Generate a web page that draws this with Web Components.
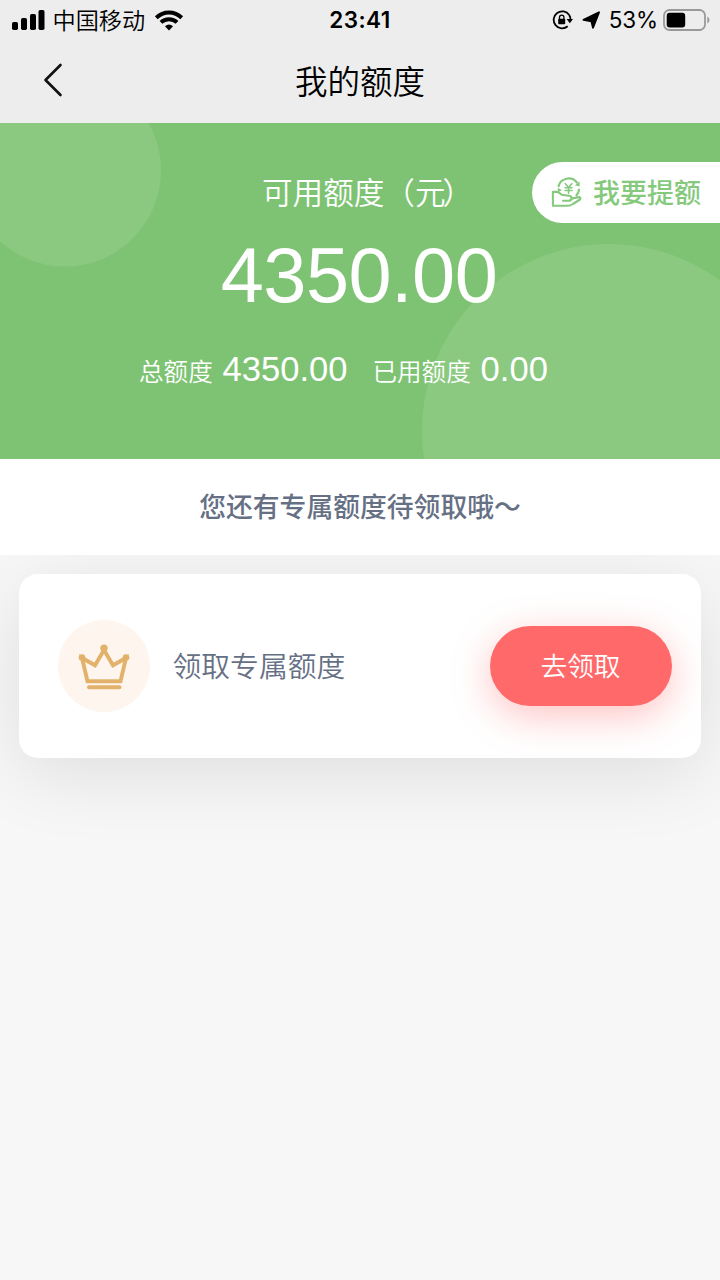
<!DOCTYPE html>
<html lang="zh-CN">
<head>
<meta charset="utf-8">
<title>我的额度</title>
<style>
body{margin:0;background:#f7f7f7;font-family:"Liberation Sans","Noto Sans CJK SC",sans-serif}
</style>
</head>
<body>
<quota-page></quota-page>
<script>
function define(name, html){
  const t=document.createElement('template');
  t.innerHTML=html;
  customElements.define(name,class extends HTMLElement{
    constructor(){super();this.attachShadow({mode:'open'}).appendChild(t.content.cloneNode(true));}
  });
}
define('status-bar',`<style>
:host{display:grid;grid-template-columns:1fr auto 1fr;align-items:center;height:39px;padding-bottom:1px;color:#000;font-family:Inter,"Noto Sans CJK SC",sans-serif}
.side{display:flex;align-items:center}
.left{padding-left:12px}
.right{justify-content:flex-end;padding-right:10px}
.carrier{font:350 23.2px/38px "Noto Sans CJK SC",sans-serif;margin:-1px 9px 0 7.5px}
.time{font-size:22.5px;font-weight:600;letter-spacing:.45px}
.pct{font-size:22.5px;margin:0 5px 0 8px;letter-spacing:-.1px}
svg{display:block}
</style>
<div class="side left">
<svg width="33" height="20" viewBox="0 0 33 20"><rect y="12" width="6" height="8" rx="1.7"/><rect x="9" y="8" width="6" height="12" rx="1.7"/><rect x="18" y="4" width="6" height="16" rx="1.7"/><rect x="26.5" width="6" height="20" rx="1.7"/></svg>
<span class="carrier">中国移动</span>
<svg width="30" height="22" viewBox="0 0 30 22"><g fill="none" stroke="#000" stroke-width="4"><path d="M2.3 8.7C9.5 1.7 20.5 1.7 27.7 8.7"/><path d="M7 13.4C11.4 9.2 18.6 9.2 23 13.4"/></g><path d="M11 17.2Q15 14 19 17.2L15 21.5Z"/></svg>
</div>
<span class="time">23:41</span>
<div class="side right">
<svg width="22" height="20" viewBox="0 0 22 20"><path d="M17.2 5A8.5 8.5 0 1 0 15.7 16.3" fill="none" stroke="#000" stroke-width="1.8"/><path d="M17.2 5Q18.6 7.2 18.5 10" fill="none" stroke="#000" stroke-width="1.8"/><path d="M14.6 9H21l-3.2 4.3z"/><rect x="6.2" y="8.7" width="7" height="5.6" rx=".8"/><path d="M7.5 9V7.3a2.2 2.2 0 0 1 4.4 0V9" fill="none" stroke="#000" stroke-width="1.3"/></svg>
<svg width="19" height="18" viewBox="0 0 19 18" style="margin-left:8px"><path d="M1.5 8.8 17 1.3 11 16.7 9.4 10.2Z" stroke="#000" stroke-width="1.9" stroke-linejoin="round"/></svg>
<span class="pct">53%</span>
<svg width="47" height="22" viewBox="0 0 47 22"><rect x="1" y="1" width="41" height="20" rx="5.5" fill="none" stroke="#999" stroke-width="1.8"/><rect x="3.7" y="3.7" width="18.5" height="14.8" rx="3"/><path d="M44.3 7.6Q46.5 9 46.5 11T44.3 14.6Z" fill="#999"/></svg>
</div>`);
define('nav-bar',`<style>
:host{display:grid;grid-template-columns:80px 1fr 80px;align-items:center;height:83px;color:#000}
svg{display:block;margin:-4px 0 0 43px}
h1{margin:0;padding-bottom:4px;text-align:center;font:350 32.5px/79px "Noto Sans CJK SC",sans-serif}
</style><svg width="20" height="34" viewBox="0 0 20 34"><path d="M17.5 2 2.5 17l15 15" fill="none" stroke="#111" stroke-width="2.6" stroke-linecap="round" stroke-linejoin="round"/></svg><h1><slot></slot></h1><span></span>`);
define('raise-button',`<style>
:host{display:flex;align-items:center;box-sizing:border-box;width:188.5px;height:61px;padding-left:19.5px;border-radius:31px 0 0 31px;background:#fff;color:#85c97c}
span{font:500 27px/60px "Noto Sans CJK SC",sans-serif;margin-left:11px;white-space:nowrap}
svg{display:block;overflow:visible}
</style><svg width="31" height="31" viewBox="0 0 31 31" fill="none" stroke="#85c97c" stroke-width="2.1" stroke-linecap="round" stroke-linejoin="round"><path d="M7.3 10A10.5 10.5 0 0 1 26.4 6.2M28.1 11.8A10.5 10.5 0 0 1 24.9 19" stroke-linecap="butt"/><path d="M28.6 4.6V9.4L23.9 8.2ZM6.8 15V10.8L11 13.2Z" fill="#85c97c" stroke="none"/><path d="M14.4 6.7 17.6 10.4 20.8 6.7M17.6 10.4V16.2M14.2 10.7H21M14.2 13.5H21" stroke-width="1.6"/><path d="M1.9 14.9V28.7H16.5Q19.5 28.7 22 27L29 22.5Q30.2 20.6 28 20.1L20.6 21.6Q20 23.8 17.3 23.8H12M1.9 14.9H6Q8.4 15.3 10.4 17.7L18 18.7Q20.8 19.2 20.6 21.6"/></svg><span><slot></slot></span>`);
define('quota-hero',`<style>
:host{display:block;position:relative;overflow:hidden;height:336px;background:#7ec373;color:#fff}
.bg{position:absolute;inset:0}
raise-button{position:absolute;right:0;top:38.5px}
.content{position:relative;display:flex;flex-direction:column}
.label{font:350 30.6px/46px "Noto Sans CJK SC",sans-serif;padding:45px 0 0 262px;white-space:nowrap}
.close{margin-left:-3px}
.sum{font-size:77.5px;line-height:90px;text-align:center;letter-spacing:-.5px;padding:16px 2px 0 0}
.row{display:flex;align-items:baseline;padding:24px 0 0 139px;line-height:50px;white-space:nowrap}
.k{font:350 24.6px/50px "Noto Sans CJK SC",sans-serif}
.v{font-size:34.6px;margin:0 24.8px 0 9.8px}
</style>
<svg class="bg" width="720" height="336"><g fill="#fff" fill-opacity=".1"><circle cx="65" cy="47.5" r="96"/><circle cx="609" cy="308" r="187"/></g></svg>
<div class="content"><div class="label">可用额度（元<span class="close">）</span></div><div class="sum">4350.00</div>
<div class="row"><span class="k">总额度</span><span class="v">4350.00</span><span class="k">已用额度</span><span class="v">0.00</span></div></div>
<raise-button>我要提额</raise-button>`);
define('notice-bar',`<style>
:host{display:block;height:96px;background:#fff;color:#667085;text-align:center;font:500 26.8px/94px "Noto Sans CJK SC",sans-serif;position:relative;z-index:1}
</style><slot></slot>`);
define('pill-button',`<style>
:host{display:block;width:182px;height:80px;border-radius:40px;background:#ff6969;color:#fff;text-align:center;font:350 26.7px/78px "Noto Sans CJK SC",sans-serif;box-shadow:0 10px 38px rgba(255,105,105,.4)}
</style><slot></slot>`);
define('reward-card',`<style>
:host{display:flex;align-items:center;box-sizing:border-box;height:184px;margin:19px 19.5px 0 19px;padding:0 29px 0 38.5px;border-radius:19px;background:#fff;box-shadow:0 16px 76px rgba(0,0,0,.1)}
.icon{display:block;width:92px;height:92px;border-radius:50%;background:#fdf5ee}
.name{flex:1;margin-left:23px;color:#667085;font:350 28.8px/58px "Noto Sans CJK SC",sans-serif;padding-bottom:2px}
</style>
<svg class="icon" viewBox="0 0 92 92"><g fill="none" stroke="#e3b26a" stroke-width="3.9" stroke-linejoin="round" stroke-linecap="round"><path d="M24 38 29.5 61.3H62.5L68 38 55 45.3 46 30 37 45.3Z" stroke-linejoin="miter"/><path d="M31 67.3H61.5"/></g><g fill="#e3b26a"><circle cx="24" cy="37.5" r="3.3"/><circle cx="46" cy="28.3" r="3.7"/><circle cx="68" cy="37.5" r="3.3"/></g></svg>
<span class="name"><slot></slot></span><pill-button>去领取</pill-button>`);
define('quota-page',`<style>
:host{display:flex;flex-direction:column;height:1280px;overflow:hidden}
header{background:#ededed}
</style><header><status-bar></status-bar><nav-bar>我的额度</nav-bar></header>
<quota-hero></quota-hero><notice-bar>您还有专属额度待领取哦～</notice-bar><reward-card>领取专属额度</reward-card>`);
</script>
</body>
</html>
